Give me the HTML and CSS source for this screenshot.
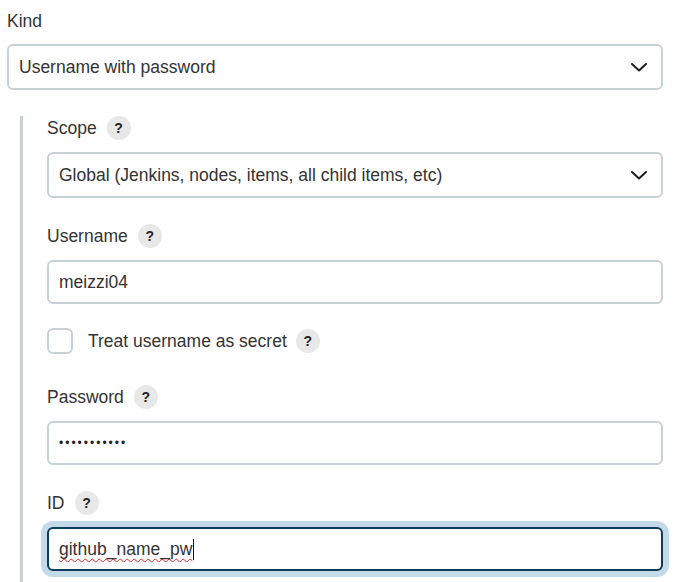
FILE: index.html
```html
<!DOCTYPE html>
<html lang="en">
<head>
<meta charset="utf-8">
<title>Credentials</title>
<link rel="stylesheet" href="styles.css">
</head>
<body>
<div class="form">
  <div class="field kind">
    <div class="label">Kind</div>
    <div class="control select">
      <span>Username with password</span>
      <svg class="chevron" width="16" height="9" viewBox="0 0 16 9"><path d="M1 1 L8 7.5 L15 1" fill="none" stroke="#1f1f1f" stroke-width="2" stroke-linecap="round" stroke-linejoin="round"/></svg>
    </div>
  </div>

  <div class="nested">
    <div class="field">
      <div class="label">Scope <span class="help">?</span></div>
      <div class="control select">
        <span>Global (Jenkins, nodes, items, all child items, etc)</span>
        <svg class="chevron" width="16" height="9" viewBox="0 0 16 9"><path d="M1 1 L8 7.5 L15 1" fill="none" stroke="#1f1f1f" stroke-width="2" stroke-linecap="round" stroke-linejoin="round"/></svg>
      </div>
    </div>

    <div class="field username">
      <div class="label">Username <span class="help">?</span></div>
      <div class="control input">meizzi04</div>
    </div>

    <div class="checkrow">
      <span class="checkbox"></span>
      <span class="checklabel">Treat username as secret</span>
      <span class="help">?</span>
    </div>

    <div class="field">
      <div class="label">Password <span class="help">?</span></div>
      <div class="control input password">•••••••••••</div>
    </div>

    <div class="field last">
      <div class="label">ID <span class="help">?</span></div>
      <div class="control input focused"><span class="misspelled">github_name_pw</span><span class="caret"></span></div>
    </div>
  </div>
</div>
</body>
</html>
```

FILE: styles.css
```css
* { box-sizing: border-box; }

html, body {
  margin: 0;
  padding: 0;
  background: #ffffff;
}

body {
  font-family: "Liberation Sans", Arial, sans-serif;
  font-size: 17.5px;
  color: #333333;
}

.form {
  padding: 9px 13px 0 7px;
}

.field {
  display: flex;
  flex-direction: column;
  gap: 12px;
  margin-bottom: 26px;
}

.field.kind {
  gap: 11px;
  margin-bottom: 26px;
}

.field.username {
  margin-bottom: 24px;
}

.field.last {
  margin-bottom: 0;
}

.label {
  display: flex;
  align-items: center;
  gap: 10px;
  height: 24px;
  line-height: 24px;
  color: #333333;
}

.help {
  display: inline-flex;
  align-items: center;
  justify-content: center;
  width: 24px;
  height: 24px;
  border-radius: 50%;
  background: #e8e8e8;
  color: #222222;
  font-weight: bold;
  font-size: 14px;
  line-height: 1;
}

.control {
  display: flex;
  align-items: center;
  border: 2px solid #c8d1d6;
  border-radius: 6px;
  padding: 0 10px;
  background: #ffffff;
  color: #333333;
}

.select {
  height: 46px;
  justify-content: space-between;
  padding-right: 14px;
}

.chevron {
  display: block;
  flex: none;
}

.input {
  height: 44px;
}

.password {
  font-size: 12px;
  letter-spacing: 2px;
  color: #222222;
}

.focused {
  border-color: #0d3b5c;
  box-shadow: 0 0 0 6px #c3dbe9;
}

.misspelled {
  text-decoration: underline wavy #e02020;
  text-decoration-thickness: 1px;
  text-underline-offset: 3px;
  text-decoration-skip-ink: none;
}

.caret {
  display: inline-block;
  width: 1px;
  height: 21px;
  background: #111111;
  margin-left: 1px;
}

.nested {
  margin-left: 13px;
  border-left: 3px solid #c6d0d5;
  padding-left: 24px;
  padding-bottom: 40px;
}

.checkrow {
  display: flex;
  align-items: center;
  height: 26px;
  margin-bottom: 31px;
}

.checkbox {
  width: 26px;
  height: 26px;
  border: 2px solid #c8d1d6;
  border-radius: 6px;
  background: #ffffff;
  margin-right: 15px;
  flex: none;
}

.checklabel {
  margin-right: 9px;
}
```
